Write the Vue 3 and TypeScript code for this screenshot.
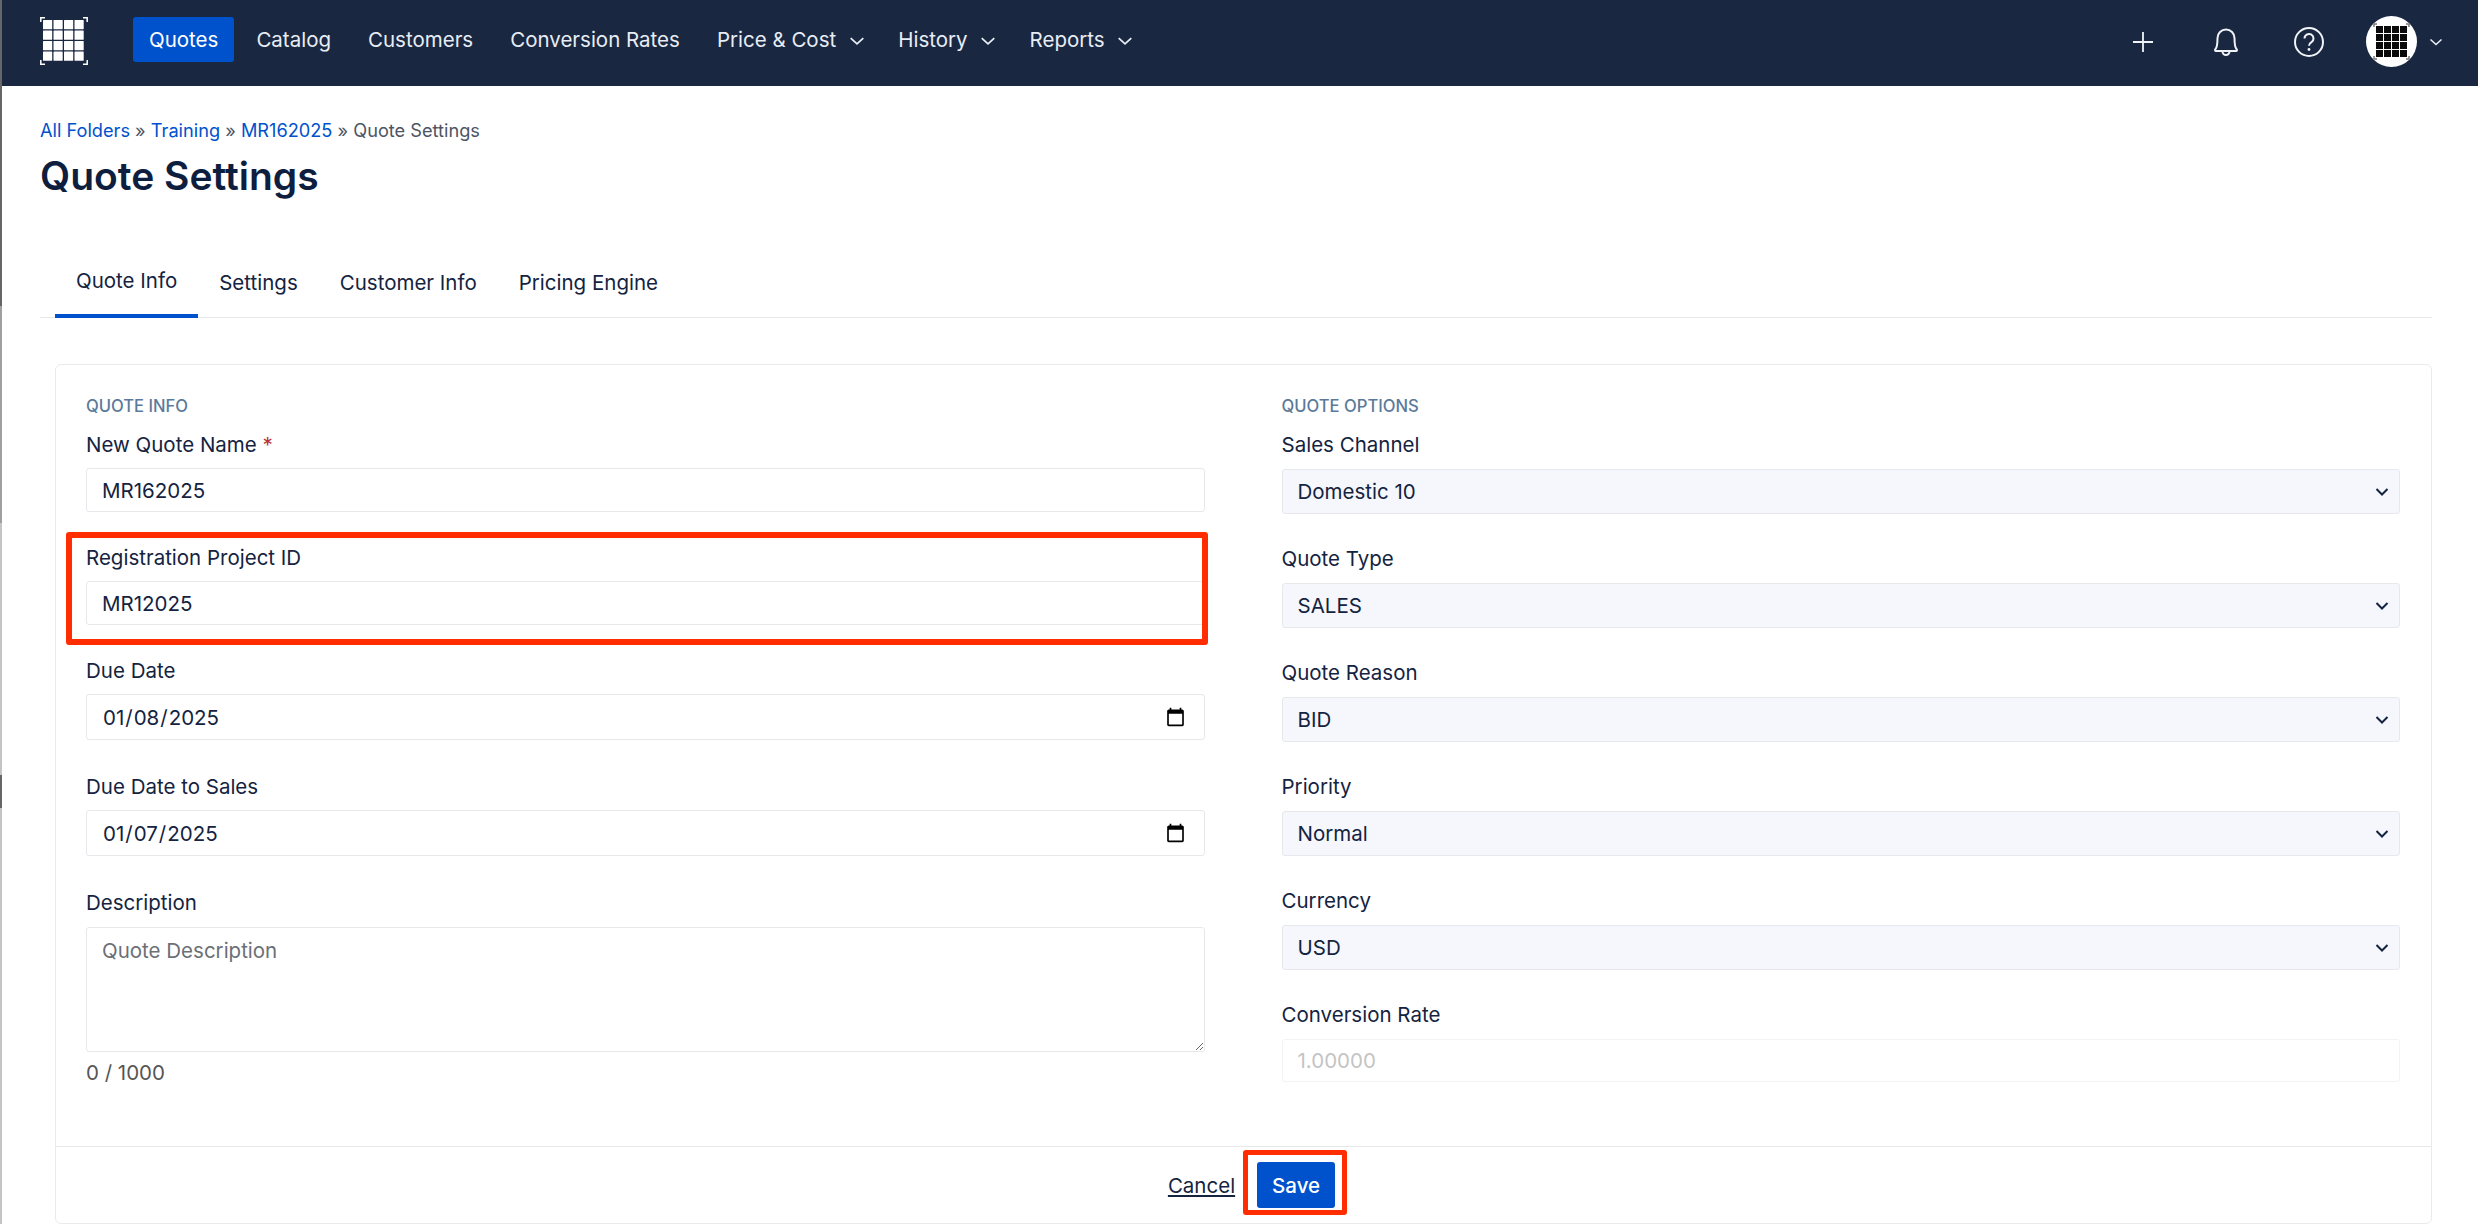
<script setup lang="ts">
import { ref } from 'vue'

const navItems = [
  { label: 'Quotes', active: true },
  { label: 'Catalog' },
  { label: 'Customers' },
  { label: 'Conversion Rates' },
  { label: 'Price & Cost', menu: true },
  { label: 'History', menu: true },
  { label: 'Reports', menu: true },
]
const tabs = ['Quote Info', 'Settings', 'Customer Info', 'Pricing Engine']
const options = [
  { label: 'Sales Channel', value: 'Domestic 10' },
  { label: 'Quote Type', value: 'SALES' },
  { label: 'Quote Reason', value: 'BID' },
  { label: 'Priority', value: 'Normal' },
  { label: 'Currency', value: 'USD' },
]
const cells = Array.from({ length: 16 }, (_, i) => ({ x: (i % 4) * 10.5 + 3, y: Math.floor(i / 4) * 10.5 + 3 }))
const avatarCells = Array.from({ length: 16 }, (_, i) => ({ x: (i % 4) * 8 + 10, y: Math.floor(i / 4) * 8 + 10 }))

const quoteName = ref('MR162025')
const projectId = ref('MR12025')
const dueDate = ref('2025-01-08')
const dueDateSales = ref('2025-01-07')
const description = ref('')
</script>

<template>
  <div class="page">
    <header class="nav">
      <svg class="logo" width="48" height="48" viewBox="0 0 48 48">
        <rect v-for="(c, i) in cells" :key="i" :x="c.x" :y="c.y" width="9.2" height="9.2" rx="0.5" fill="#fff" />
        <path d="M.8 5V.8H5M43 .8h4.2V5M.8 43v4.2H5M47.2 43v4.2H43" fill="none" stroke="#fff" stroke-width="1.5" />
      </svg>
      <nav class="nav-items">
        <a v-for="item in navItems" :key="item.label" class="nav-item" :class="{ active: item.active }">
          {{ item.label }}
          <svg v-if="item.menu" class="caret" width="14" height="10" viewBox="0 0 14 10">
            <path d="M.7 2.2 7 7.800l6.300-5.600" fill="none" stroke="#e8edf5" stroke-width="1.800" />
          </svg>
        </a>
      </nav>
      <div class="nav-right">
        <svg class="plus" width="20" height="20" viewBox="0 0 20 20">
          <path d="M10 0v20M0 10h20" stroke="#f0f3f8" stroke-width="1.8" />
        </svg>
        <svg class="bell" width="24" height="30" viewBox="0 0 24 30">
          <path d="M2 24c-1 0-1.200-1-.6-1.800C3 20.500 3.500 17 3.500 11a8.500 8.500 0 0 1 17 0c0 6 .5 9.500 2.100 11.200.6.800.4 1.800-.6 1.800z" fill="none" stroke="#f0f3f8" stroke-width="2" stroke-linejoin="round" />
          <path d="M8.500 24.500a3.500 3.500 0 0 0 7 0" fill="none" stroke="#f0f3f8" stroke-width="2" />
        </svg>
        <svg class="help" width="30" height="30" viewBox="0 0 30 30">
          <circle cx="15" cy="15" r="14" fill="none" stroke="#f0f3f8" stroke-width="2" />
          <path d="M10.500 11.500a4.500 4.500 0 1 1 7 3.700c-1.600 1-2.500 1.800-2.500 3.600" fill="none" stroke="#f0f3f8" stroke-width="2" />
          <circle cx="15" cy="22.500" r="1.400" fill="#f0f3f8" />
        </svg>
        <svg class="avatar" width="51" height="51" viewBox="0 0 51 51">
          <circle cx="25.500" cy="25.500" r="25.500" fill="#fff" />
          <rect v-for="(c, i) in avatarCells" :key="i" :x="c.x" :y="c.y" width="7" height="7" fill="#0a0a0a" />
          <path d="M8 11V8h3M40 8h3v3M8 40v3h3M43 40v3h-3" fill="none" stroke="#777" stroke-width="1.500" />
        </svg>
        <svg class="user-caret" width="14" height="10" viewBox="0 0 14 10">
          <path d="M1.500 2.500 7 7.500l5.500-5" fill="none" stroke="#e8edf5" stroke-width="1.600" />
        </svg>
      </div>
    </header>

    <main class="content">
      <div class="crumbs">
        <a>All Folders</a> » <a>Training</a> » <a>MR162025</a> » Quote Settings
      </div>
      <h1>Quote Settings</h1>

      <div class="tabs">
        <a v-for="(tab, i) in tabs" :key="tab" class="tab" :class="{ active: i === 0 }">{{ tab }}</a>
      </div>

      <section class="card">
        <div class="columns">
          <div class="col left">
            <h2>QUOTE INFO</h2>
            <div class="field">
              <label>New Quote Name <span class="req">*</span></label>
              <input v-model="quoteName" type="text" />
            </div>
            <div class="field marked">
              <label>Registration Project ID</label>
              <input v-model="projectId" type="text" />
              <div class="mark mark-field"></div>
            </div>
            <div class="field wide">
              <label>Due Date</label>
              <input v-model="dueDate" class="date" type="date" />
            </div>
            <div class="field wide">
              <label>Due Date to Sales</label>
              <input v-model="dueDateSales" class="date" type="date" />
            </div>
            <div class="field">
              <label class="desc-label">Description</label>
              <textarea v-model="description" placeholder="Quote Description"></textarea>
              <div class="count">0 / 1000</div>
            </div>
          </div>

          <div class="col right">
            <h2>QUOTE OPTIONS</h2>
            <div v-for="opt in options" :key="opt.label" class="field">
              <label>{{ opt.label }}</label>
              <div class="select">
                <select>
                  <option>{{ opt.value }}</option>
                </select>
                <svg width="14" height="10" viewBox="0 0 14 10">
                  <path d="M1.500 2 7 7.500 12.500 2" fill="none" stroke="#14233f" stroke-width="2" />
                </svg>
              </div>
            </div>
            <div class="field">
              <label>Conversion Rate</label>
              <input class="rate" type="text" value="1.00000" disabled />
            </div>
          </div>
        </div>

        <footer class="actions">
          <a class="cancel">Cancel</a>
          <div class="save-wrap">
            <button class="save">Save</button>
            <div class="mark mark-save"></div>
          </div>
        </footer>
      </section>
    </main>
    <div class="edge"></div>
  </div>
</template>

<style>
html,
body {
  margin: 0;
  background: #fff;
}
</style>

<style scoped>
.page {
  position: relative;
  height: 1224px;
  overflow: hidden;
  font-family: Inter, "Liberation Sans", sans-serif;
  font-size: 20.5px;
  color: #14233f;
}
.edge {
  position: absolute;
  left: 0;
  top: 0;
  width: 2px;
  height: 100%;
  background: linear-gradient(
    to bottom,
    #666 0 306px,
    #a0a0a0 306px 523px,
    #c4c4c4 523px 775px,
    #666 775px 808px,
    #c4c4c4 808px
  );
}
.nav {
  display: flex;
  align-items: center;
  height: 86px;
  padding: 0 35px 0 40px;
  box-sizing: border-box;
  background: #1a2740;
}
.logo {
  margin-right: 45px;
  margin-top: -4px;
}
.nav-items {
  display: flex;
  gap: 7px;
  margin-top: -7px;
}
.nav-item {
  display: flex;
  align-items: center;
  gap: 13.5px;
  height: 45px;
  padding: 0 15px;
  color: #e8edf5;
}
.nav-item.active {
  padding: 0 16px;
  background: #0052cc;
  border-radius: 3px;
  color: #fff;
}
.caret {
  margin-right: -2.5px;
  margin-top: 2px;
}
.nav-right {
  display: flex;
  align-items: center;
  margin-left: auto;
  margin-top: -3px;
}
.bell {
  margin-left: 61px;
}
.help {
  margin-left: 56px;
}
.avatar {
  margin-left: 42px;
}
.user-caret {
  margin-left: 12px;
}
.content {
  padding: 0 46px 0 40px;
}
.crumbs {
  margin-top: 33px;
  font-size: 18.2px;
  line-height: 22px;
  color: #4d5563;
}
.crumbs a {
  color: #0052cc;
}
h1 {
  margin: 11px 0 0;
  font-size: 39px;
  line-height: 48px;
  font-weight: 600;
  color: #0e1e3e;
}
.tabs {
  display: flex;
  margin-top: 47px;
  padding-left: 15px;
  height: 71px;
  box-sizing: border-box;
  border-bottom: 1px solid #e6e8ec;
}
.tab {
  display: flex;
  align-items: center;
  height: 71px;
  box-sizing: border-box;
  padding: 0 21px;
}
.tab.active {
  border-bottom: 4px solid #0052cc;
}
.card {
  margin: 46px 0 0 15px;
  height: 860px;
  box-sizing: border-box;
  border: 1px solid #e8eaee;
  border-radius: 6px;
  display: flex;
  flex-direction: column;
}
.columns {
  display: grid;
  grid-template-columns: 1fr 1fr;
  gap: 77px;
  padding: 31px 31px 0 30px;
  flex: 1;
}
h2 {
  margin: 0 0 17px;
  font-size: 16.6px;
  line-height: 20px;
  font-weight: 500;
  color: #5b7a9a;
}
.field {
  margin-bottom: 34px;
}
.field.wide {
  margin-bottom: 35px;
}
.right .field {
  margin-bottom: 33.5px;
}
.field label {
  display: block;
  line-height: 24px;
  margin-bottom: 11px;
}
.right .field label {
  margin-bottom: 11.5px;
}
.field .desc-label {
  margin-bottom: 12px;
}
.req {
  color: #b83232;
}
input,
select,
textarea {
  display: block;
  width: 100%;
  box-sizing: border-box;
  font-family: inherit;
  font-size: 20.5px;
  color: #14233f;
  border: 1px solid #e6e8ec;
  border-radius: 3px;
  background: #fff;
  outline: none;
  margin: 0;
}
input {
  height: 44px;
  padding: 0 15px;
}
.date {
  height: 46px;
  padding-right: 16px;
}
textarea {
  height: 125px;
  padding: 10px 15px;
  resize: vertical;
}
textarea::placeholder {
  color: #6b6f76;
}
.count {
  margin-top: 9px;
  color: #555;
  line-height: 24px;
}
.select {
  position: relative;
}
select {
  height: 45px;
  padding: 0 15px;
  background: #f5f7fc;
  appearance: none;
}
.select svg {
  position: absolute;
  right: 11px;
  top: 18px;
  pointer-events: none;
}
.rate {
  height: 43px;
  color: #c4c4c4;
  border-color: #f2f3f5;
}
.actions {
  display: flex;
  justify-content: center;
  align-items: center;
  gap: 22px;
  height: 77px;
  box-sizing: border-box;
  padding-left: 16px;
  border-top: 1px solid #e6e8ec;
}
.cancel {
  text-decoration: underline;
}
.save-wrap {
  position: relative;
}
.save {
  display: block;
  width: 78px;
  height: 46px;
  background: #0052cc;
  color: #fff;
  border: none;
  border-radius: 3px;
  font-family: inherit;
  font-size: 20.5px;
  font-weight: 500;
}
.marked {
  position: relative;
}
.mark {
  position: absolute;
  border-style: solid;
  border-color: #ff2d00;
  border-radius: 3px;
  pointer-events: none;
}
.mark-field {
  border-width: 6px;
  left: -20.5px;
  right: -3.5px;
  top: -14px;
  bottom: -20px;
}
.mark-save {
  border-width: 5px;
  left: -14px;
  right: -12px;
  top: -12px;
  bottom: -7px;
}
</style>
